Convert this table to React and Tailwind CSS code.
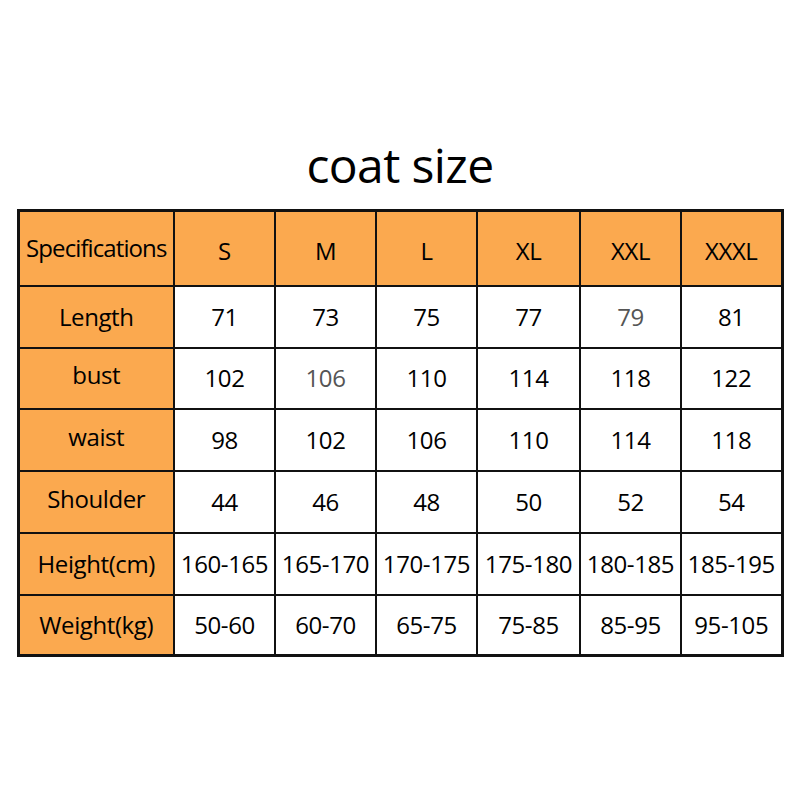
const COLS = ['S', 'M', 'L', 'XL', 'XXL', 'XXXL'];

const ROWS = [
  { label: 'Length', h: 'h-[62px]', values: ['71', '73', '75', '77', '79', '81'], grey: [4] },
  { label: 'bust', h: 'h-[61px]', values: ['102', '106', '110', '114', '118', '122'], grey: [1], lift: true },
  { label: 'waist', h: 'h-[62px]', values: ['98', '102', '106', '110', '114', '118'], grey: [], lift: true },
  { label: 'Shoulder', h: 'h-[62px]', values: ['44', '46', '48', '50', '52', '54'], grey: [], lift: true },
  { label: 'Height(cm)', h: 'h-[62px]', values: ['160-165', '165-170', '170-175', '175-180', '180-185', '185-195'], grey: [] },
  { label: 'Weight(kg)', h: 'h-[61px]', values: ['50-60', '60-70', '65-75', '75-85', '85-95', '95-105'], grey: [] },
];

export default function App() {
  return (
    <div className="w-[800px] h-[800px] bg-white flex flex-col items-center text-black" style={{ fontFamily: '"Open Sans", "Noto Sans", sans-serif' }}>
      {/* Title */}
      <h1 className="mt-[135px] h-[60px] text-[48px] leading-[60px] tracking-[-0.6px]">coat size</h1>

      {/* Size table */}
      <table className="mt-[14px] border-collapse border-[3px] border-[#111] text-[24px] tracking-[-0.4px]">
        <colgroup>
          <col className="w-[156px]" />
          <col className="w-[101px]" />
          <col className="w-[101px]" />
          <col className="w-[101px]" />
          <col className="w-[103px]" />
          <col className="w-[101px]" />
          <col className="w-[101px]" />
        </colgroup>
        <thead>
          <tr className="h-[75px] bg-[#fba94f]">
            <th className="border-2 border-[#111] p-0 font-normal text-[24px] tracking-[-0.9px] whitespace-nowrap">Specifications</th>
            {COLS.map((c) => (
              <th key={c} className="border-2 border-[#111] p-0 pt-[6px] font-normal">{c}</th>
            ))}
          </tr>
        </thead>
        <tbody>
          {ROWS.map((r) => (
            <tr key={r.label} className={r.h}>
              <td className={`border-2 border-[#111] bg-[#fba94f] p-0 text-center ${r.lift ? 'pb-[6px]' : ''}`}>{r.label}</td>
              {r.values.map((v, i) => (
                <td
                  key={i}
                  className={`border-2 border-[#111] p-0 text-center whitespace-nowrap ${r.grey.includes(i) ? 'text-[#555]' : 'text-black'}`}
                >
                  {v}
                </td>
              ))}
            </tr>
          ))}
        </tbody>
      </table>
    </div>
  );
}
